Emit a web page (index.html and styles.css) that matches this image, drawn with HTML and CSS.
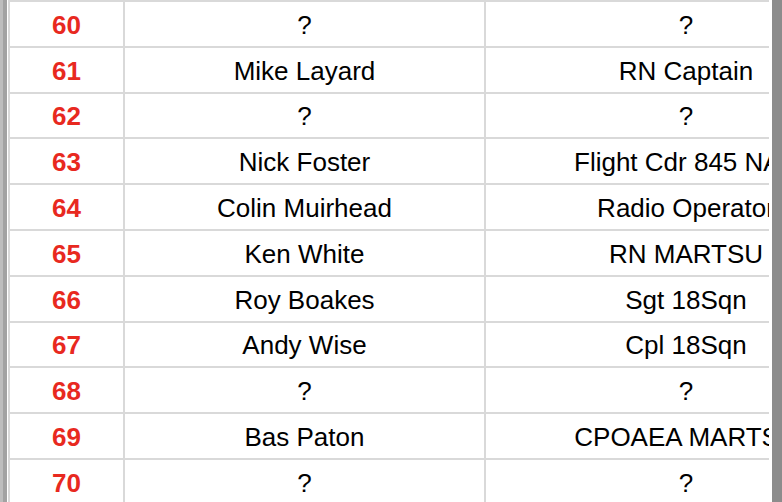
FILE: index.html
```html
<!DOCTYPE html>
<html>
<head>
<meta charset="utf-8">
<link rel="stylesheet" href="styles.css">
</head>
<body>
<div class="page">
  <div class="edge"><span class="edge-a"></span><span class="edge-b"></span></div>
  <div class="viewport">
    <div class="grid">
      <div class="num">60</div><div class="cell">?</div><div class="cell">?</div>
      <div class="num">61</div><div class="cell">Mike Layard</div><div class="cell">RN Captain</div>
      <div class="num">62</div><div class="cell">?</div><div class="cell">?</div>
      <div class="num">63</div><div class="cell">Nick Foster</div><div class="cell">Flight Cdr 845 NAS</div>
      <div class="num">64</div><div class="cell">Colin Muirhead</div><div class="cell">Radio Operator</div>
      <div class="num">65</div><div class="cell">Ken White</div><div class="cell">RN MARTSU</div>
      <div class="num">66</div><div class="cell">Roy Boakes</div><div class="cell">Sgt 18Sqn</div>
      <div class="num">67</div><div class="cell">Andy Wise</div><div class="cell">Cpl 18Sqn</div>
      <div class="num">68</div><div class="cell">?</div><div class="cell">?</div>
      <div class="num">69</div><div class="cell">Bas Paton</div><div class="cell">CPOAEA MARTSU</div>
      <div class="num">70</div><div class="cell">?</div><div class="cell">?</div>
    </div>
  </div>
  <div class="spacer"></div>
  <div class="scroll"></div>
</div>
</body>
</html>
```
FILE: styles.css
```css
html, body {
  margin: 0;
  padding: 0;
  background: #fff;
  overflow: hidden;
}
.page {
  display: flex;
  width: 782px;
  height: 502px;
  overflow: hidden;
}
.edge {
  display: flex;
  width: 8px;
  flex: none;
}
.edge-a {
  width: 3px;
  background: #bdbdbd;
}
.edge-b {
  width: 4px;
  background: #a2a2a2;
}
.viewport {
  width: 761px;
  flex: none;
  overflow: hidden;
}
.grid {
  display: grid;
  grid-template-columns: 113px 359px 400px;
  grid-auto-rows: 43.8px;
  gap: 2px;
  padding: 2px 0 0 2px;
  background: #d9d9d9;
  width: max-content;
  font-family: "Liberation Sans", Arial, sans-serif;
  font-size: 26px;
}
.num, .cell {
  background: #fff;
  display: flex;
  align-items: center;
  justify-content: center;
  white-space: nowrap;
  overflow: hidden;
  padding-top: 3px;
  box-sizing: border-box;
}
.num {
  color: #e8291f;
  font-weight: bold;
}
.cell {
  color: #000;
}
.spacer {
  width: 3px;
  flex: none;
}
.scroll {
  width: 10px;
  flex: none;
  background: #8c8c8c;
}
```
